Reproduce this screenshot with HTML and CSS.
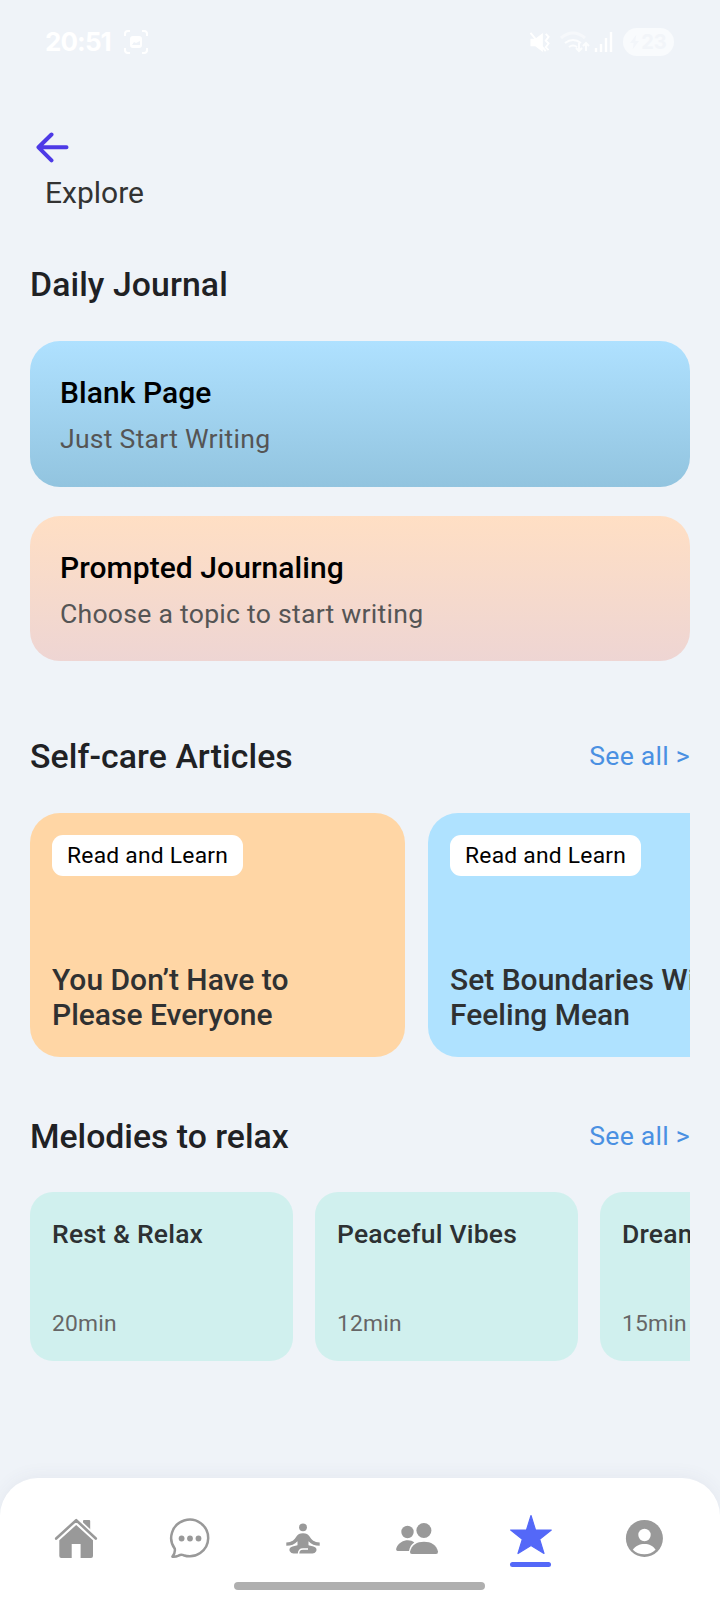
FILE: index.html
```html
<!DOCTYPE html>
<html lang="en">
<head>
<meta charset="utf-8">
<title>Explore</title>
<link rel="stylesheet" href="styles.css">
</head>
<body>
<div class="screen">
  <header class="status">
    <div class="status-group">
      <span class="clock">20:51</span>
      <svg class="capture" viewBox="0 0 24 24"><path d="M1 6V4a3 3 0 0 1 3-3h2M18 1h2a3 3 0 0 1 3 3v2M23 18v2a3 3 0 0 1-3 3h-2M6 23H4a3 3 0 0 1-3-3v-2" fill="none" stroke="#fff" stroke-width="2"/><path fill-rule="evenodd" fill="#fff" d="M9 6h6a3 3 0 0 1 3 3v6a3 3 0 0 1-3 3H9a3 3 0 0 1-3-3V9a3 3 0 0 1 3-3zM8 15h8v-4l-2 1-2 1-2-1z"/></svg>
    </div>
    <div class="status-group status-right">
      <svg class="mute" viewBox="0 0 22 22"><path d="M1 7h5l8-6v20l-8-6H1z" fill="#fff"/><path d="M1 1l16 19M17 2l3 3-3 4 3 3-3 4 3 3" stroke="#fff" stroke-width="2" fill="none"/></svg>
      <svg class="wifi" viewBox="0 0 30 22"><path d="M1 7q12-10 24 0" fill="none" stroke="#f6f8fb" stroke-width="3"/><path d="M5 12q8-6 16 0M9 16q4-3 8 0M19 12v8m-3-3l3 3 3-3M26 20v-8m-3 3l3-3 3 3" fill="none" stroke="#fcfdfe" stroke-width="2"/></svg>
      <svg class="signal" viewBox="0 0 20 22"><path d="M2 17v4M7 13v8M12 7v14M17 1v20" stroke="#fff" stroke-width="2.4"/></svg>
      <span class="battery"><svg viewBox="0 0 10 16"><path d="M7 0L0 9h4l-1 7 7-9H6z" fill="#f3f6fa"/></svg>23</span>
    </div>
  </header>

  <main class="content">
    <svg class="back" viewBox="0 0 34 32"><path d="M30.500 16.300H2.500M15.500 3.500L2.500 16.300l13 13" fill="none" stroke="#4d3ae6" stroke-width="4" stroke-linecap="round" stroke-linejoin="round"/></svg>
    <p class="page-name">Explore</p>

    <h2 class="heading">Daily Journal</h2>
    <section class="journal">
      <article class="entry entry-blank"><h3>Blank Page</h3><p>Just Start Writing</p></article>
      <article class="entry entry-prompt"><h3>Prompted Journaling</h3><p>Choose a topic to start writing</p></article>
    </section>

    <div class="section-head section-articles"><h2 class="heading">Self-care Articles</h2><a class="more">See all &gt;</a></div>
    <section class="articles">
      <article class="article article-orange"><span class="badge">Read and Learn</span><h3>You Don’t Have to<br>Please Everyone</h3></article>
      <article class="article article-blue"><span class="badge">Read and Learn</span><h3>Set Boundaries Without<br>Feeling Mean</h3></article>
    </section>

    <div class="section-head section-melodies"><h2 class="heading">Melodies to relax</h2><a class="more">See all &gt;</a></div>
    <section class="melodies">
      <article class="melody"><h3>Rest &amp; Relax</h3><p>20min</p></article>
      <article class="melody"><h3>Peaceful Vibes</h3><p>12min</p></article>
      <article class="melody"><h3>Dreamscape</h3><p>15min</p></article>
    </section>
  </main>

  <nav class="tabs">
    <div class="tab-row">
      <div class="tab"><svg viewBox="0 0 44 48"><path d="M29 17V9q0-1 1-1h5.200q1 0 1 1v15z"/><path d="M2.200 26.500L22.200 8.200 41.800 26.500" fill="none" stroke="#fff" stroke-width="6"/><path d="M2.200 26.500L22.200 8.200 41.800 26.500" fill="none" stroke="#999" stroke-width="2.600" stroke-linecap="round" stroke-linejoin="round"/><path d="M22.200 13L5.300 28.300V44q0 2 2 2H17.700V32H26.600V46H37q2 0 2-2V28.300z"/></svg></div>
      <div class="tab"><svg viewBox="0 0 44 48"><path d="M6.800 36.800A18.500 18.300 0 1 1 15.500 43.200Q13 42.200 10.500 43.600 7.700 45 4.400 44.700Q7.400 41.500 6.800 36.800z" fill="none" stroke="#999" stroke-width="2.500" stroke-linejoin="round"/><circle cx="13.600" cy="26.500" r="2.900"/><circle cx="22" cy="26.500" r="2.900"/><circle cx="30.500" cy="26.500" r="2.900"/></svg></div>
      <div class="tab"><svg viewBox="0 0 44 48"><circle cx="22" cy="15.300" r="3.900"/><path d="M22 21.200c3.500 0 5 .9 6.400 3 2.300 3.800 4.500 5.800 10.300 6.300v3.300c-5-.1-8.300-1.500-11.200-4.600v5.300h-11v-5.300C13.600 32.300 10.300 33.700 5.300 33.800v-3.300c5.800-.5 8-2.500 10.300-6.300 1.400-2.100 2.900-3 6.400-3z"/><path d="M16.500 33.200l-5 1.200C8.200 35.300 8 38 9 39.600c.8 1.300 2 1.900 3.600 1.900H31.400c1.600 0 2.800-.6 3.600-1.900 1-1.600.8-4.300-2.500-5.200l-5-1.200z"/><path d="M17.500 42c.1-3.800 1.300-4.900 4.500-4.900h5" fill="none" stroke="#fff" stroke-width="1.500"/></svg></div>
      <div class="tab"><svg viewBox="0 0 44 48"><circle cx="12.500" cy="20" r="6.200"/><path d="M3.500 39C1 39 .8 37.500 1.500 35.700 4.400 28.300 14.500 26.200 19.300 30.500 16.500 32 14.800 35 14 39z"/><circle cx="28.900" cy="18.500" r="7.500"/><path d="M17 42q-2.200 0-1.900-2.500C16.500 33 22 29.800 29 29.800S41.500 33 43 39.500Q43.200 42 41 42z"/></svg></div>
      <div class="tab"><svg class="star" viewBox="0 0 44 48"><path d="M22 3.500L26.500 18H42.300L30.700 27.300 35 41.500 22 33.500 9 41.500 13.300 27.300 1.700 18H17.500z" stroke="#5468f8" stroke-width="1.200" stroke-linejoin="round"/></svg><span class="active-bar"></span></div>
      <div class="tab"><svg viewBox="0 0 44 48"><circle cx="22.400" cy="26.400" r="18.500"/><circle cx="22.500" cy="23" r="6.200" fill="#fff"/><path d="M10.800 37.800C13.300 34 17.800 32 22.500 32S31.300 34 33.600 37.800C30.300 41 26.800 42.200 22.300 42.200S13.800 41 10.800 37.800z" fill="#fff"/></svg></div>
    </div>
    <div class="home-indicator"></div>
  </nav>
</div>
</body>
</html>
```

FILE: styles.css
```css
* { box-sizing: border-box; margin: 0; }
body { background: #eff3f8; font-family: Roboto, sans-serif; }
svg { display: block; flex: none; }

.screen { width: 720px; height: 1600px; display: flex; flex-direction: column; overflow: hidden; }

.status { height: 84px; padding: 0 46px 0 45px; display: flex; justify-content: space-between; align-items: center; color: #fff; }
.status-group { display: flex; align-items: center; }
.clock { font: 700 26px/30px Inter, sans-serif; letter-spacing: -0.9px; }
.capture { width: 24px; height: 24px; margin-left: 13px; }
.mute { width: 22px; height: 21px; margin-right: 9px; }
.wifi { width: 30px; height: 22px; margin-right: 4px; }
.signal { width: 20px; height: 22px; margin-right: 9px; }
.battery { width: 51px; height: 28px; border-radius: 14px; background: #f9fbfd; color: #f2f5f9; display: flex; align-items: center; justify-content: center; gap: 2px; font: 700 20px/28px Inter, sans-serif; }
.battery svg { width: 9px; height: 16px; }

.content { flex: 1; padding: 47px 30px 0; }
.back { width: 34px; height: 32px; margin-left: 6px; }
.page-name { margin: 12px 0 0 15px; font-size: 30px; line-height: 36px; color: #333; }

.heading { font-weight: 500; font-size: 33.75px; line-height: 40px; letter-spacing: 0.1px; color: #202124; }
.section-melodies .heading { letter-spacing: 0; }
.page-name + .heading { margin-top: 54px; }

.journal { margin-top: 36px; display: grid; gap: 29px; }
.entry { height: 146px; padding: 34px 30px 0; border-radius: 30px; }
.entry-blank { background: linear-gradient(#afe1ff, #92c4df); }
.entry-prompt { height: 145px; background: linear-gradient(#ffdfc4, #eed5d3); }
.entry h3 { font-weight: 500; font-size: 30px; line-height: 36px; letter-spacing: 0.06px; color: #000; }
.entry p { margin-top: 12px; font-size: 26.6px; line-height: 32px; letter-spacing: 0.25px; color: #555; }

.section-head { display: flex; justify-content: space-between; align-items: center; }
.section-articles { margin-top: 76px; }
.section-melodies { margin-top: 60px; }
.more { padding-bottom: 2px; font-size: 26.6px; line-height: 32px; letter-spacing: 0.25px; color: #4a90e2; }

.articles { margin-top: 36px; display: flex; gap: 23px; overflow: hidden; }
.article { flex: none; width: 375px; height: 244px; padding: 22px 22px 25px; border-radius: 30px; display: flex; flex-direction: column; align-items: flex-start; justify-content: space-between; }
.article-orange { background: #ffd6a5; }
.article-blue { background: #afe2ff; }
.badge { padding: 0 15px; border-radius: 11px; background: #fff; font-size: 22.8px; line-height: 41px; letter-spacing: 0.25px; color: #000; }
.article h3 { font-weight: 500; font-size: 30px; line-height: 35px; color: #2f3132; white-space: nowrap; }

.melodies { margin-top: 35px; display: flex; gap: 22px; overflow: hidden; }
.melody { flex: none; width: 263px; height: 169px; padding: 26px 22px 23px; border-radius: 23px; background: #d0f0ee; display: flex; flex-direction: column; justify-content: space-between; }
.melody h3 { font-weight: 500; font-size: 26.5px; line-height: 32px; letter-spacing: 0.2px; color: #2d3133; }
.melody p { font-size: 22.8px; line-height: 28px; letter-spacing: 0.2px; color: #666; }

.tabs { height: 122px; padding: 34px 19px 10px; border-radius: 38px 38px 0 0; background: #fff; box-shadow: 0 -2px 18px rgba(60, 70, 100, 0.06); display: flex; flex-direction: column; justify-content: space-between; align-items: center; }
.tab-row { width: 100%; display: flex; }
.tab { flex: 1; display: flex; flex-direction: column; align-items: center; gap: 2px; }
.tab svg { width: 44px; height: 48px; fill: #999; }
.tab .star { fill: #5468f8; }
.active-bar { width: 41px; height: 5px; border-radius: 3px; background: #5468f8; }
.home-indicator { width: 251px; height: 8px; margin-right: 1px; border-radius: 4px; background: #afafaf; }
```
